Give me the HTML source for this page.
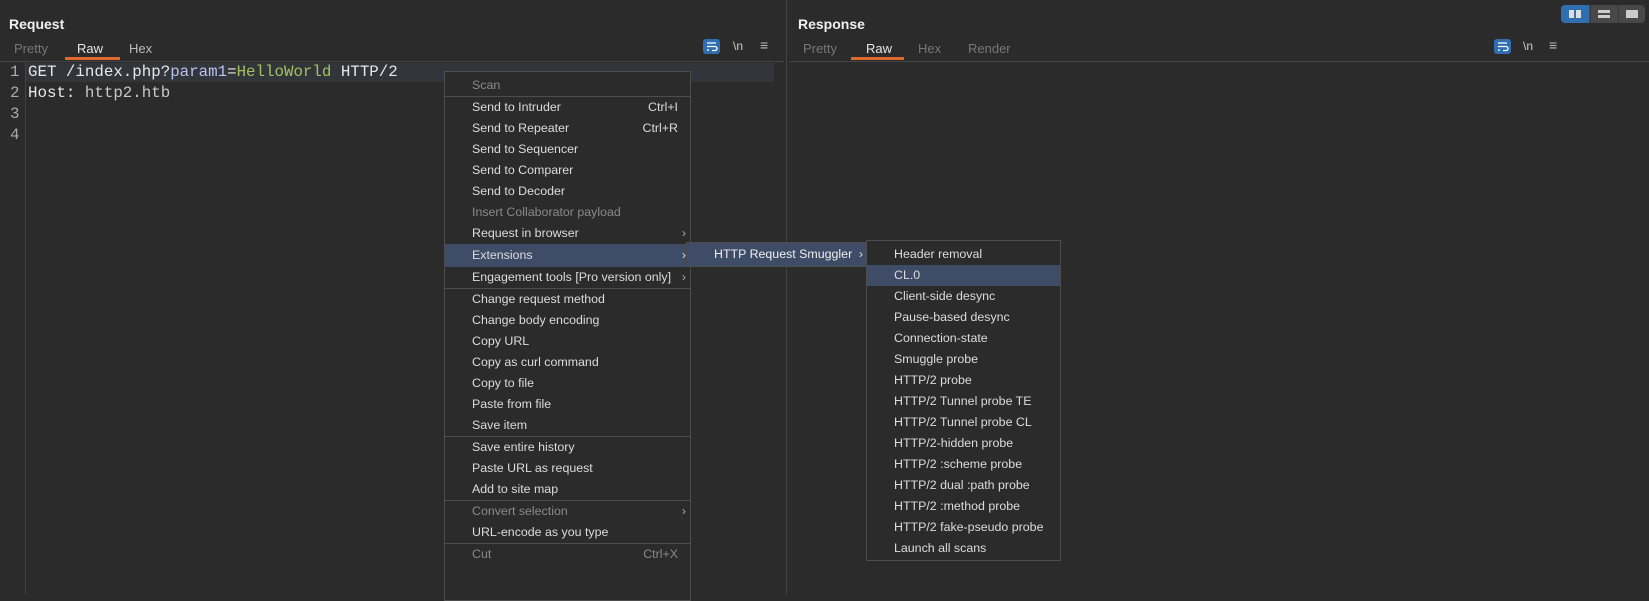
<!DOCTYPE html>
<html><head><meta charset="utf-8"><style>
*{margin:0;padding:0;box-sizing:border-box}
body{width:1649px;height:594px;background:#2b2b2b;position:relative;overflow:hidden;font-family:"Liberation Sans","DejaVu Sans",sans-serif;color:#d8d8d8;font-size:13px}
.abs{position:absolute}
.title{font-weight:bold;font-size:14px;color:#f0f0f0}
.tab{position:absolute;top:41px;font-size:13px;color:#777}
.tab.on{color:#e6e6e6}
.ul{position:absolute;top:57px;height:3px;background:#e06a2e}
.hline{position:absolute;top:61px;height:1px;background:#444}
.mono{font-family:"Liberation Mono","DejaVu Sans Mono",monospace;font-size:15.8px;line-height:21px}
.menu{position:absolute;background:#2b2b2b;border:1px solid #4d4d4d}
.it{position:relative;height:21px;line-height:21px;padding-left:27px;white-space:nowrap;color:#dcdcdc;font-size:12.4px}
.it.dis{color:#8a8a8a}
.it.hl{background:#3f4c68}
.sc{position:absolute;right:12px;top:0}
.ar{position:absolute;right:4px;top:0;color:#aaa}
.sep{height:1px;background:#4d4d4d}
.icb{position:absolute;width:17px;height:15px;background:#2f6fb0;border-radius:3px}
</style></head><body>
<div class="abs title" style="left:9px;top:16px">Request</div>
<div class="tab" style="left:14px">Pretty</div>
<div class="tab on" style="left:77px">Raw</div>
<div class="tab" style="left:129px;color:#bbb">Hex</div>
<div class="ul" style="left:65px;width:55px"></div>
<div class="hline" style="left:0;width:784px"></div>
<div class="icb" style="left:703px;top:39px"><svg width="17" height="15"><path d="M4 4h9M4 7.5h8a2 2 0 0 1 0 4h-3M4 11h2" stroke="#fff" stroke-width="1.3" fill="none"/></svg></div>
<div class="abs" style="left:733px;top:39px;color:#ccc;font-size:12px">\n</div>
<div class="abs" style="left:760px;top:37px;color:#bbb;font-size:14px">≡</div>
<div class="abs" style="left:786px;top:0;width:1px;height:594px;background:#444"></div>
<div class="abs" style="left:25px;top:62px;width:1px;height:532px;background:#444"></div>
<div class="abs" style="left:26px;top:63px;width:748px;height:19px;background:#32353a"></div>
<div class="abs mono" style="left:10px;top:62px;color:#aaa">1<br>2<br>3<br>4</div>
<div class="abs mono" style="left:28px;top:62px;color:#e8e8e8;white-space:pre">GET /index.php?<span style="color:#b9c3f0">param1</span>=<span style="color:#a5c25c">HelloWorld</span> HTTP/2
Host: <span style="color:#c8c8c8">http2.htb</span></div>

<div class="abs title" style="left:798px;top:16px">Response</div>
<div class="tab" style="left:803px">Pretty</div>
<div class="tab on" style="left:866px">Raw</div>
<div class="tab" style="left:918px">Hex</div>
<div class="tab" style="left:968px">Render</div>
<div class="ul" style="left:851px;width:53px"></div>
<div class="hline" style="left:789px;width:860px"></div>
<div class="icb" style="left:1494px;top:39px"><svg width="17" height="15"><path d="M4 4h9M4 7.5h8a2 2 0 0 1 0 4h-3M4 11h2" stroke="#fff" stroke-width="1.3" fill="none"/></svg></div>
<div class="abs" style="left:1523px;top:39px;color:#ccc;font-size:12px">\n</div>
<div class="abs" style="left:1549px;top:37px;color:#bbb;font-size:14px">≡</div>
<div class="abs" style="left:1561px;top:5px;width:84px;height:18px;background:#484848;border-radius:4px"></div>
<div class="abs" style="left:1561px;top:5px;width:28px;height:18px;background:#2f6fb0;border-radius:4px 0 0 4px"></div>
<div class="abs" style="left:1569px;top:10px;width:5px;height:8px;background:#ddd"></div>
<div class="abs" style="left:1576px;top:10px;width:5px;height:8px;background:#ddd"></div>
<div class="abs" style="left:1598px;top:10px;width:12px;height:3px;background:#ccc"></div>
<div class="abs" style="left:1598px;top:15px;width:12px;height:3px;background:#ccc"></div>
<div class="abs" style="left:1590px;top:5px;width:1px;height:18px;background:#3a3a3a"></div>
<div class="abs" style="left:1618px;top:5px;width:1px;height:18px;background:#3a3a3a"></div>
<div class="abs" style="left:1626px;top:10px;width:12px;height:8px;background:#ccc"></div>

<div class="menu" style="left:444px;top:71px;width:247px;height:530px">
<div class="it dis" style="margin-top:3px">Scan</div>
<div class="sep"></div>
<div class="it">Send to Intruder<span class="sc">Ctrl+I</span></div>
<div class="it">Send to Repeater<span class="sc">Ctrl+R</span></div>
<div class="it">Send to Sequencer</div>
<div class="it">Send to Comparer</div>
<div class="it">Send to Decoder</div>
<div class="it dis">Insert Collaborator payload</div>
<div class="it">Request in browser<span class="ar">›</span></div>
<div class="it hl" style="height:23px;line-height:23px">Extensions<span class="ar" style="color:#ddd">›</span></div>
<div class="it">Engagement tools [Pro version only]<span class="ar">›</span></div>
<div class="sep"></div>
<div class="it">Change request method</div>
<div class="it">Change body encoding</div>
<div class="it">Copy URL</div>
<div class="it">Copy as curl command</div>
<div class="it">Copy to file</div>
<div class="it">Paste from file</div>
<div class="it">Save item</div>
<div class="sep"></div>
<div class="it">Save entire history</div>
<div class="it">Paste URL as request</div>
<div class="it">Add to site map</div>
<div class="sep"></div>
<div class="it dis">Convert selection<span class="ar">›</span></div>
<div class="it">URL-encode as you type</div>
<div class="sep"></div>
<div class="it dis">Cut<span class="sc">Ctrl+X</span></div>
</div>

<div class="menu" style="left:686px;top:242px;width:182px;height:25px">
<div class="it hl" style="height:23px;line-height:23px;color:#eee">HTTP Request Smuggler<span class="ar" style="color:#ddd">›</span></div>
</div>

<div class="menu" style="left:866px;top:240px;width:195px;height:321px">
<div class="it" style="margin-top:3px">Header removal</div>
<div class="it hl">CL.0</div>
<div class="it">Client-side desync</div>
<div class="it">Pause-based desync</div>
<div class="it">Connection-state</div>
<div class="it">Smuggle probe</div>
<div class="it">HTTP/2 probe</div>
<div class="it">HTTP/2 Tunnel probe TE</div>
<div class="it">HTTP/2 Tunnel probe CL</div>
<div class="it">HTTP/2-hidden probe</div>
<div class="it">HTTP/2 :scheme probe</div>
<div class="it">HTTP/2 dual :path probe</div>
<div class="it">HTTP/2 :method probe</div>
<div class="it">HTTP/2 fake-pseudo probe</div>
<div class="it">Launch all scans</div>
</div>
</body></html>
